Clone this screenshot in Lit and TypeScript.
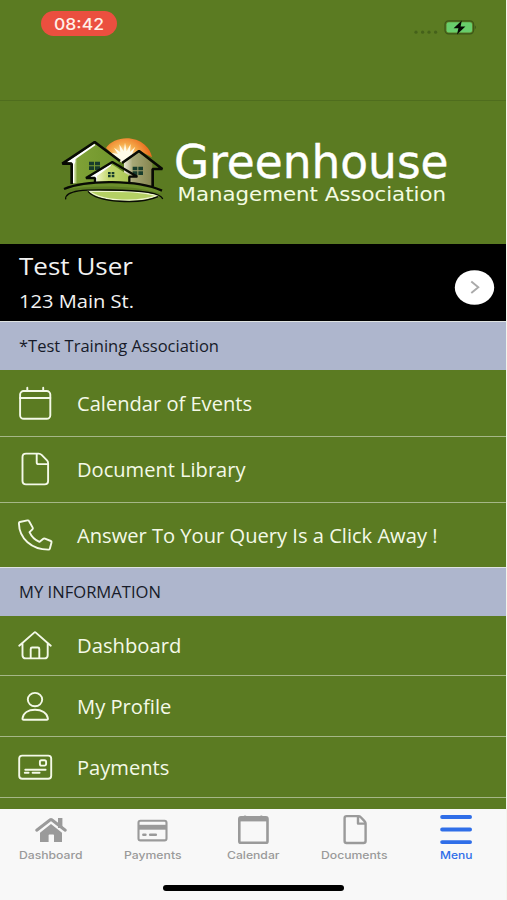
import { LitElement, html, svg, css } from "lit";
import { customElement, property } from "lit/decorators.js";

/** Single-line text set to a fixed advance width. */
@customElement("fit-label")
class FitLabel extends LitElement {
  @property() text = "";
  @property({ type: Number }) width = 100;
  @property({ type: Number }) height = 30;
  @property({ type: Number }) baseline = 22;

  static styles = css`
    :host { display: block; flex: none; }
    .box { display: block; overflow: visible; }
    .text { fill: currentColor; white-space: pre; }
  `;

  render() {
    return html`<svg class="box" width=${this.width} height=${this.height}>
      <text class="text" x="0" y=${this.baseline} textLength=${this.width} lengthAdjust="spacingAndGlyphs">${this.text}</text>
    </svg>`;
  }
}

const icons: Record<string, unknown> = {
  calendar: svg`<rect x="-14.9" y="-12" width="30.2" height="27.8" rx="3.6"/><path d="M-15 -5H15.3M-7.7 -12V-15.2M8.2 -12V-15.2"/>`,
  document: svg`<path d="M-9 -15.4H3.6C5 -15.4 5.7 -15 6.6 -14.1L12 -8.6C12.8 -7.8 13.1 -7 13.1 -5.8V12C13.1 14.3 11.9 15.4 9.6 15.4H-9C-11.3 15.4 -12.5 14.3 -12.5 12V-12C-12.5 -14.3 -11.3 -15.4 -9 -15.4Z"/><path d="M1.7 -15V-6.8Q1.7 -4.9 3.6 -4.9H13"/>`,
  phone: svg`<path d="M-15.2 -13L-7.6 -14.6Q-6.4 -14.8 -5.9 -13.8L-2.3 -7.4Q-1.8 -6.5 -2.6 -5.7L-5.5 -2.8C-3.6 1.4 .2 5.2 4.4 6.9L8 4Q8.9 3.3 10 3.7L15.8 6Q16.8 6.4 16.5 7.5L14.9 13.4Q14.6 14.6 13.3 14.6C-3.2 14.6 -15.8 3.8 -16.1 -11.7Q-16.1 -12.8 -15.2 -13Z"/>`,
  home: svg`<path d="M-15.8 .7L-.8 -12.4Q0 -13.1 .8 -12.4L15.8 .7M-12.5 -2V10.2Q-12.5 13.4 -9.2 13.4H9.4Q12.7 13.4 12.7 10.2V-2M-4.3 13.4V3.9Q-4.3 2.5 -2.9 2.5H2.9Q4.3 2.5 4.3 3.9V13.4"/>`,
  person: svg`<ellipse cx="0" cy="-6.4" rx="7.2" ry="6.7"/><path d="M-11.4 13.8Q-12.7 13.8 -12.5 12.4C-11.8 6.8 -6.6 3.7 0 3.7S12.2 6.8 12.9 12.4Q13.1 13.8 11.8 13.8Z"/>`,
  card: svg`<rect x="-15.8" y="-11.4" width="32" height="23.2" rx="3"/><rect x="4.9" y="-6.8" width="6.2" height="5.4" rx="1.6"/><path d="M-9.7 2.7H10.6M-10.2 5.8H-6.4M-2.4 5.8H4.6"/>`,
};

const tabIcons: Record<string, unknown> = {
  home: svg`<path class="solid" d="M-11 2.7L0 -6L11 2.7V11.9H3V5.2Q3 4.4 2.2 4.4H-1.6Q-2.4 4.4 -2.4 5.2V11.9H-11Z"/><path class="solid" d="M7 -12H11.4V-2H7Z"/><path class="line" stroke-width="3" d="M-14.3 .2L-.7 -10.2Q0 -10.7 .7 -10.2L14.3 .2"/>`,
  card: svg`<rect class="line" x="-13.5" y="-9.2" width="28" height="19.6" rx="2" stroke-width="2.1"/><path class="solid" d="M-14 -5.2H15V-.3H-14Z"/><path class="line" stroke-width="2.6" d="M-8.6 4.7H-6.6M-1.8 4.7H3.8"/>`,
  calendar: svg`<rect class="line" x="-13.7" y="-12.6" width="28.2" height="25.4" rx="1.6" stroke-width="2.6"/><path class="solid" d="M-14 -13H14.8V-8.6H-14Z"/><path class="line" stroke-width="3" d="M-8.3 -13.1H-7.6M8 -13.1H8.7"/>`,
  document: svg`<path class="line" stroke-width="2.4" d="M-8.4 -13.9H3.5Q4.8 -13.9 5.6 -13L9.7 -8.6Q10.6 -7.7 10.6 -6.4V11Q10.6 13 8.4 13H-8.4Q-10.4 13 -10.4 11V-11.9Q-10.4 -13.9 -8.4 -13.9ZM3 -13.5V-6.4H10.2"/>`,
  menu: svg`<path class="line" stroke-width="3.8" d="M-13.9 -13H14.1M-13.9 -.5H14.1M-13.9 12.1H14.1"/>`,
};

const association = [
  { icon: "calendar", text: "Calendar of Events", width: 175 },
  { icon: "document", text: "Document Library", width: 168.5 },
  { icon: "phone", text: "Answer To Your Query Is a Click Away !", width: 360.5 },
];
const personal = [
  { icon: "home", text: "Dashboard", width: 104.3 },
  { icon: "person", text: "My Profile", width: 94.3 },
  { icon: "card", text: "Payments", width: 92.3 },
];
const tabs = [
  { icon: "home", text: "Dashboard", width: 63.5 },
  { icon: "card", text: "Payments", width: 57.5 },
  { icon: "calendar", text: "Calendar", width: 52.5 },
  { icon: "document", text: "Documents", width: 66.5 },
  { icon: "menu", text: "Menu", width: 32.5 },
];

@customElement("app-root")
class AppRoot extends LitElement {
  static styles = css`
    :host {
      display: flex; flex-direction: column; box-sizing: border-box;
      width: 507px; height: 900px; overflow: hidden;
      background: #5b7b22; color: #f4f9e8;
      border-right: 1px solid #f3f5ee;
      font-family: "Open Sans", "Noto Sans", sans-serif;
    }
    svg { display: block; flex: none; }
    .status {
      height: 101px; box-sizing: border-box; flex: none;
      display: flex; justify-content: space-between; align-items: flex-start;
      padding: 11px 29px 0 41px; border-bottom: 1px solid #4f6d1e;
    }
    .clock {
      display: flex; justify-content: center; width: 76px; height: 25px; border-radius: 13px;
      background: #eb4f3f; color: #fff0e8; font: 500 16px Inter, sans-serif;
    }
    .brand { height: 143px; flex: none; }
    .brand-name { font: 46px "DejaVu Sans", sans-serif; fill: #fff; stroke: #fff; stroke-width: 0.4; }
    .brand-sub { font: 20.2px "DejaVu Sans", sans-serif; fill: #f4fbe2; }
    .user {
      height: 77px; flex: none; background: #000; color: #f2f2f2; box-sizing: border-box;
      display: flex; align-items: flex-start; justify-content: space-between; padding: 0 11px 0 19px;
    }
    .name { font-size: 24px; }
    .address { font-size: 18.6px; }
    .who { display: flex; flex-direction: column; gap: 4px; padding-top: 3px; }
    .go { margin-top: 26px; }
    .section {
      height: 49px; flex: none; box-sizing: border-box; background: #aeb6cd; color: #171b29;
      border-top: 1px solid #dfe3e2; padding: 9px 0 0 18.5px; font-size: 15.6px;
    }
    .row {
      box-sizing: border-box; height: 66.5px; flex: none; display: flex; align-items: center;
      gap: 20px; padding-left: 13px; border-bottom: 1.5px solid #a6b787; font-size: 19.2px;
    }
    .tall .row:last-child { height: 63.5px; border-bottom: 0; }
    .short .row { height: 60.8px; }
    .icon { stroke: #f4f9e8; stroke-width: 1.9; fill: none; stroke-linecap: round; stroke-linejoin: round; }
    .filler { flex: 1; }
    .tabbar {
      height: 91px; flex: none; box-sizing: border-box; background: #f8f8f8; margin-right: -1px;
      display: flex; flex-direction: column; align-items: center; justify-content: space-between; padding-bottom: 9px;
    }
    .tabs { display: grid; grid-template-columns: repeat(5, 101.2px); width: 506px; }
    .tab { display: flex; flex-direction: column; align-items: center; color: #9a9a9a; font: 500 10.8px Inter, sans-serif; }
    .tab.active { color: #2f6ee8; }
    .solid { fill: currentColor; }
    .line { fill: none; stroke: currentColor; stroke-linecap: round; stroke-linejoin: round; }
    .indicator { width: 181px; height: 5.6px; border-radius: 3px; background: #000; }
  `;

  label(text: string, width: number, height = 30, baseline = 22, cls = "") {
    return html`<fit-label class=${cls} .text=${text} .width=${width} .height=${height} .baseline=${baseline}></fit-label>`;
  }

  row = (r: { icon: string; text: string; width: number }) => html`
    <div class="row">
      <svg class="icon" width="44" height="44" viewBox="-22 -22 44 44">${icons[r.icon]}</svg>
      ${this.label(r.text, r.width, 30, 22.6)}
    </div>`;

  tab = (t: { icon: string; text: string; width: number }) => html`
    <div class="tab ${t.icon === "menu" ? "active" : ""}">
      <svg width="40" height="38" viewBox="-20 -21 40 38">${tabIcons[t.icon]}</svg>
      ${this.label(t.text, t.width, 16, 11.8)}
    </div>`;

  logo() {
    return html`<svg class="brand" width="506" height="143" viewBox="0 101 506 143">
      <defs>
        <radialGradient id="sun" gradientUnits="userSpaceOnUse" cx="222" cy="86" r="78">
          <stop offset="0.2" stop-color="#fff3c4"/><stop offset="0.55" stop-color="#f6ad4c"/><stop offset="1" stop-color="#ea6d1f"/>
        </radialGradient>
        <linearGradient id="wall" x1="0" x2="1"><stop offset="0" stop-color="#fff"/><stop offset="0.07" stop-color="#d9e6b3"/><stop offset="0.13" stop-color="#7fa136"/><stop offset="1" stop-color="#6f952b"/></linearGradient>
        <linearGradient id="tan" x1="0" x2="1"><stop offset="0" stop-color="#eceada"/><stop offset="0.3" stop-color="#a8a877"/><stop offset="1" stop-color="#84854f"/></linearGradient>
        <linearGradient id="lime" x1="0" x2="1"><stop offset="0" stop-color="#f3f8cf"/><stop offset="0.4" stop-color="#c4d86f"/><stop offset="1" stop-color="#a9c653"/></linearGradient>
      </defs>
      <g transform="translate(50 130) scale(0.33333)">
        <path fill="url(#sun)" d="M168 54C190 20 250 14 284 44Q302 60 306 82L268 62L215 98Z"/>
        <path fill="#fffbe8" d="M184 68L204 72L192 53L211 67L208 43L221 64L225 38L230 64L242 42L240 66L256 50L246 72L262 64L216 98Z"/>
        <path fill="url(#wall)" d="M63 94L132 38L206 92V160H63Z"/>
        <path fill="#fff" d="M50 95L133 41L136 46L76 88V96L72 104V158H64V98Z"/>
        <path fill="url(#tan)" d="M222 98L267 65L307 100V166H222Z"/>
        <path fill="none" stroke="#080a04" stroke-width="8" stroke-linejoin="bevel" d="M65 162V101H37L134 36L210 93"/>
        <path fill="none" stroke="#080a04" stroke-width="8" stroke-linejoin="bevel" d="M216 99L267 63L337 117H308V170"/>
        <g fill="#173c2c"><path d="M117 95h15v11h-15zM135 95h15v11h-15zM117 109h15v11h-15zM135 109h15v11h-15zM248 110h14v11h-14zM265 110h14v11h-14zM248 124h14v11h-14zM265 124h14v11h-14z"/></g>
        <path fill="url(#lime)" d="M134 138L187 104L240 138V156H134Z"/>
        <path fill="#fff" d="M118 141L187 99L182 108L141 138V156H134V142Z"/>
        <path fill="none" stroke="#080a04" stroke-width="7" stroke-linejoin="bevel" d="M135 158V144H108L187 96L262 140H238V158"/>
        <path fill="#173c2c" d="M174 126h8v7h-8zM185 126h8v7h-8zM174 135h8v7h-8zM185 135h8v7h-8z"/>
        <path fill="#6a8e2a" d="M46 174C120 146 262 148 334 180L330 190C250 164 130 166 46 178Z"/>
        <path fill="none" stroke="#080a04" stroke-width="7" d="M42 177C110 149 262 149 336 182"/>
        <path fill="#b4d064" stroke="#eef5cf" stroke-width="4" d="M117 183C180 187 250 177 322 197C270 216 160 218 117 183Z"/>
        <path fill="none" stroke="#080a04" stroke-width="4" d="M47 208C44 180 110 178 180 180S330 184 338 207M114 184C142 218 270 224 324 200"/>
      </g>
      <text class="brand-name" x="174" y="178.4" textLength="274.5" lengthAdjust="spacingAndGlyphs">Greenhouse</text>
      <text class="brand-sub" x="177.5" y="200.5" textLength="268.5" lengthAdjust="spacingAndGlyphs">Management Association</text>
    </svg>`;
  }

  render() {
    return html`
      <div class="status">
        <div class="clock">${this.label("08:42", 50, 25, 18.6)}</div>
        <svg width="64" height="30" viewBox="413 11 64 30">
          <g fill="#45611a"><circle cx="416" cy="32.2" r="1.6"/><circle cx="422.6" cy="32.2" r="1.6"/><circle cx="429" cy="32.2" r="1.6"/><circle cx="435.6" cy="32.2" r="1.6"/></g>
          <rect x="445" y="20.9" width="28.6" height="13" rx="3.6" fill="none" stroke="#3d5718" stroke-width="1.2"/>
          <path d="M474.8 25.3Q477 27.3 474.8 29.4Z" fill="#3d5718"/>
          <rect x="446.5" y="22.3" width="25.6" height="10.2" rx="2.2" fill="#68ce6c"/>
          <path d="M461.8 20.4L453.6 28.3H458.4L457 34.6L465.4 26.4H460.6Z" fill="#050804"/>
        </svg>
      </div>
      ${this.logo()}
      <div class="user">
        <div class="who">
          ${this.label("Test User", 114, 34, 27.6, "name")}
          ${this.label("123 Main St.", 115, 30, 23, "address")}
        </div>
        <svg class="go" width="41" height="36" viewBox="-20.5 -17.5 41 36">
          <ellipse cx="0" cy="0" rx="19.7" ry="17.3" fill="#fff"/>
          <path d="M-3.2 -6L3.8 -.2L-3.2 5.6" fill="none" stroke="#aaa" stroke-width="1.9"/>
        </svg>
      </div>
      <div class="section">${this.label("*Test Training Association", 200, 30, 20.6)}</div>
      <div class="tall">${association.map(this.row)}</div>
      <div class="section">${this.label("MY INFORMATION", 142, 30, 20.6)}</div>
      <div class="short">${personal.map(this.row)}</div>
      <div class="filler"></div>
      <div class="tabbar">
        <div class="tabs">${tabs.map(this.tab)}</div>
        <div class="indicator"></div>
      </div>`;
  }
}
